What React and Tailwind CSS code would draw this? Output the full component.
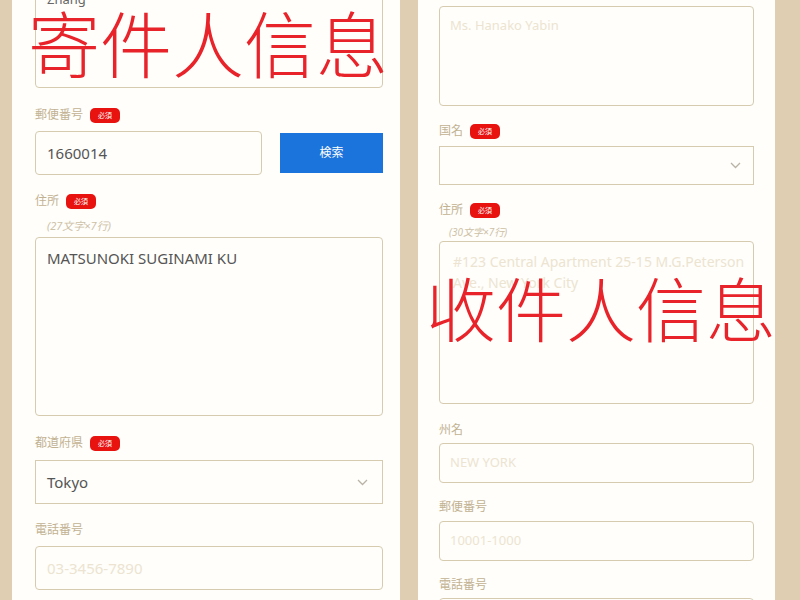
import React from "react";

const font = { fontFamily: '"Noto Sans", "Noto Sans CJK JP", sans-serif' };

function Badge() {
  return (
    <span className="ml-[7px] inline-flex h-[15px] w-[30px] items-center justify-center rounded-[5px] bg-[#e8120f] text-[7px] leading-none text-white">
      必須
    </span>
  );
}

function Label({ text, req, mt }) {
  return (
    <div className={`flex h-[16px] items-center text-[12px] leading-none text-[#c2b292] ${mt}`}>
      <span>{text}</span>
      {req && <Badge />}
    </div>
  );
}

function Chevron() {
  return (
    <svg width="11" height="7" viewBox="0 0 11 7" fill="none" stroke="#b9b3a6" strokeWidth="1.3">
      <path d="M1 1l4.5 4.5L10 1" />
    </svg>
  );
}

export default function App() {
  return (
    <div className="flex h-[600px] w-[800px] overflow-hidden bg-[#e0ceb2]" style={font}>
      <div className="w-[12px] shrink-0" />
      {/* left panel */}
      <div className="relative w-[388px] shrink-0 bg-[#fffefb] pl-[23px] pr-[17px]">
        <div className="-mt-[12px] flex flex-col">
          <div className="h-[100px] rounded-[4px] border border-[#d6cbaf] px-[11px] pt-[2px] text-[13px] leading-[16px] text-[#666]">
            Zhang
          </div>
          <Label text="郵便番号" req mt="mt-[19px]" />
          <div className="mt-[8px] flex items-center gap-[18px]">
            <div className="flex h-[44px] w-[227px] items-center rounded-[4px] border border-[#d6cbaf] px-[11px] text-[15px] text-[#555]">
              1660014
            </div>
            <div className="flex h-[40px] flex-1 items-center justify-center bg-[#1b74dc] text-[12px] text-white">
              検索
            </div>
          </div>
          <Label text="住所" req mt="mt-[18px]" />
          <div className="mt-[10px] h-[14px] pl-[12px] text-[11px] italic leading-[14px] text-[#cdc1a6]">
            (27文字×7行)
          </div>
          <div className="mt-[4px] h-[179px] rounded-[4px] border border-[#d6cbaf] px-[11px] pt-[11px] text-[15px] leading-[18px] text-[#555]">
            MATSUNOKI SUGINAMI KU
          </div>
          <Label text="都道府県" req mt="mt-[19px]" />
          <div className="mt-[9px] flex h-[44px] items-center justify-between border border-[#d6cbaf] pl-[11px] pr-[14px] text-[15px] text-[#555]">
            <span>Tokyo</span>
            <Chevron />
          </div>
          <Label text="電話番号" mt="mt-[18px]" />
          <div className="mt-[8px] flex h-[44px] items-center rounded-[4px] border border-[#d6cbaf] px-[11px] text-[15px] text-[#ece4d0]">
            03-3456-7890
          </div>
        </div>
        <div
          className="pointer-events-none absolute left-[16px] top-[5px] whitespace-nowrap text-[72px] font-light leading-none text-[#e8232a]"
          style={{ fontFamily: '"Noto Sans CJK SC", sans-serif' }}
        >
          寄件人信息
        </div>
      </div>
      <div className="w-[18px] shrink-0" />
      {/* right panel */}
      <div className="relative w-[357px] shrink-0 bg-[#fffefb] px-[21px]">
        <div className="-mt-[14px] flex flex-col">
          <Label text="受取人名" mt="mt-0" />
          <div className="mt-[4px] h-[100px] rounded-[4px] border border-[#d6cbaf] px-[10px] pt-[10px] text-[13px] leading-[16px] text-[#ece4d0]">
            Ms. Hanako Yabin
          </div>
          <Label text="国名" req mt="mt-[17px]" />
          <div className="mt-[7px] flex h-[39px] items-center justify-end border border-[#d6cbaf] pr-[12px]">
            <Chevron />
          </div>
          <Label text="住所" req mt="mt-[17px]" />
          <div className="mt-[7px] h-[14px] pl-[10px] text-[10px] italic leading-[14px] text-[#cdc1a6]">
            (30文字×7行)
          </div>
          <div className="mt-[2px] h-[163px] whitespace-nowrap rounded-[4px] border border-[#d6cbaf] pl-[13px] pt-[9px] text-[14px] leading-[21px] text-[#ece4d0]">
            #123 Central Apartment 25-15 M.G.Peterson
            <br />
            Ave., New York City
          </div>
          <Label text="州名" mt="mt-[18px]" />
          <div className="mt-[5px] flex h-[40px] items-center rounded-[4px] border border-[#d6cbaf] px-[10px] text-[13px] text-[#ece4d0]">
            NEW YORK
          </div>
          <Label text="郵便番号" mt="mt-[16px]" />
          <div className="mt-[6px] flex h-[40px] items-center rounded-[4px] border border-[#d6cbaf] px-[10px] text-[13px] text-[#ece4d0]">
            10001-1000
          </div>
          <Label text="電話番号" mt="mt-[16px]" />
          <div className="mt-[5px] flex h-[40px] items-center rounded-[4px] border border-[#d6cbaf] px-[10px] text-[13px] text-[#ece4d0]">
            03-3456-7890
          </div>
        </div>
        <div
          className="pointer-events-none absolute left-[8px] top-[272px] whitespace-nowrap text-[70px] font-light leading-none text-[#e8232a]"
          style={{ fontFamily: '"Noto Sans CJK SC", sans-serif' }}
        >
          收件人信息
        </div>
      </div>
      <div className="flex-1" />
    </div>
  );
}
